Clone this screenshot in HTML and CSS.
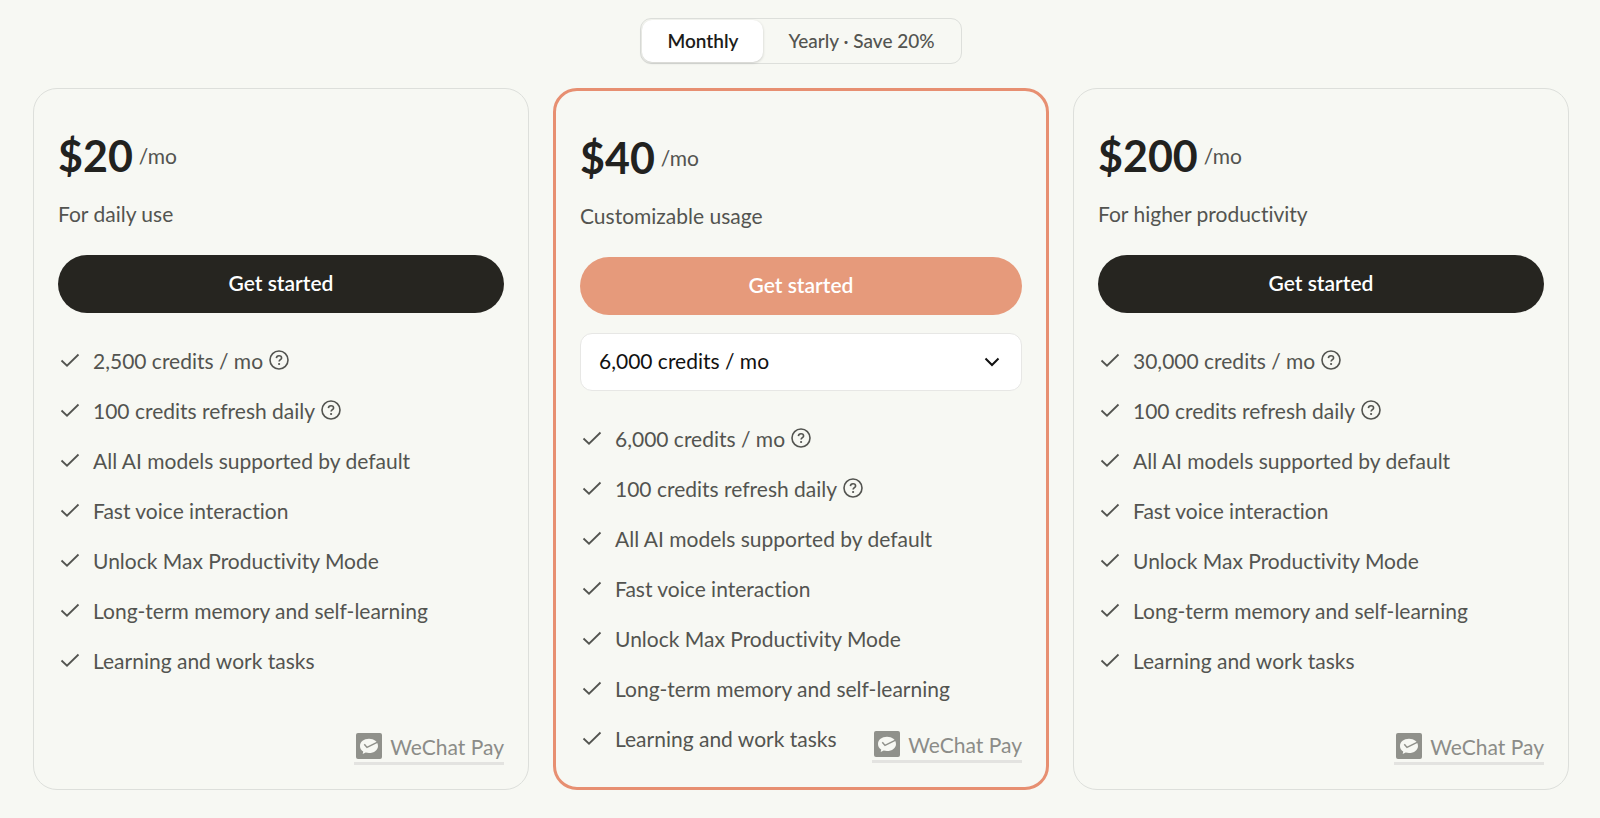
FILE: index.html
```
<!DOCTYPE html>
<html lang="en">
<head>
    <meta charset="UTF-8">
    <meta name="viewport" content="width=device-width, initial-scale=1">
    <title>Pricing</title>
    <link rel="stylesheet" href="styles.css">
</head>
<body>

<!-- shared icons -->
<svg class="icon-defs" width="0" height="0" aria-hidden="true">
    <symbol id="check" viewBox="0 0 24 24">
        <path d="M3.500 12.500l5.500 5.200L20.500 6.500" fill="none" stroke="currentColor" stroke-width="1.800"/>
    </symbol>
    <symbol id="help" viewBox="0 0 20 20">
        <circle cx="10" cy="10" r="9" fill="none" stroke="currentColor" stroke-width="1.600"/>
        <path d="M7.400 8.100c.1-1.500 1.200-2.400 2.600-2.400s2.600.9 2.600 2.200c0 1.800-2.500 1.800-2.500 3.700" fill="none" stroke="currentColor" stroke-width="1.600"/>
        <circle cx="10.100" cy="14" r="1.100" fill="currentColor"/>
    </symbol>
    <symbol id="wechat" viewBox="0 0 26 26">
        <rect width="26" height="26" rx="2" fill="#90918b"/>
        <path d="M13 5.800c-5.100 0-9 3.100-9 7.100 0 2.300 1.200 4.200 3.200 5.500l-.5 2.600 3-1.500c1 .3 2.100.5 3.300.5 5.100 0 9-3.100 9-7.100s-3.900-7.100-9-7.100z" fill="#f7f8f3"/>
        <path d="M8.300 11.200l2.700 3.200 10.600-5.300" fill="none" stroke="#90918b" stroke-width="1.500"/>
    </symbol>
</svg>

<div class="billing">
    <button class="billing-option active" type="button" aria-pressed="true">Monthly</button>
    <button class="billing-option" type="button" aria-pressed="false">Yearly · Save 20%</button>
</div>

<main class="plans">
    <section class="plan">
        <div class="price"><strong>$20</strong><span>/mo</span></div>
        <p class="tagline">For daily use</p>
        <button class="start" type="button">Get started</button>
        <ul class="features">
            <li><svg class="check"><use href="#check"/></svg>2,500 credits / mo<button class="help" type="button" aria-label="About credits"><svg><use href="#help"/></svg></button></li>
            <li><svg class="check"><use href="#check"/></svg>100 credits refresh daily<button class="help" type="button" aria-label="About daily refresh"><svg><use href="#help"/></svg></button></li>
            <li><svg class="check"><use href="#check"/></svg>All AI models supported by default</li>
            <li><svg class="check"><use href="#check"/></svg>Fast voice interaction</li>
            <li><svg class="check"><use href="#check"/></svg>Unlock Max Productivity Mode</li>
            <li><svg class="check"><use href="#check"/></svg>Long-term memory and self-learning</li>
            <li><svg class="check"><use href="#check"/></svg>Learning and work tasks</li>
        </ul>
        <a class="wechat" href="#"><svg><use href="#wechat"/></svg>WeChat Pay</a>
    </section>

    <section class="plan featured">
        <div class="price"><strong>$40</strong><span>/mo</span></div>
        <p class="tagline">Customizable usage</p>
        <button class="start" type="button">Get started</button>
        <div class="credits">
            <select aria-label="Credits per month">
                <option>6,000 credits / mo</option>
            </select>
            <svg class="chevron" viewBox="0 0 16 16"><path d="M1.500 4.500L8 11l6.500-6.500" fill="none" stroke="#111" stroke-width="2"/></svg>
        </div>
        <ul class="features">
            <li><svg class="check"><use href="#check"/></svg>6,000 credits / mo<button class="help" type="button" aria-label="About credits"><svg><use href="#help"/></svg></button></li>
            <li><svg class="check"><use href="#check"/></svg>100 credits refresh daily<button class="help" type="button" aria-label="About daily refresh"><svg><use href="#help"/></svg></button></li>
            <li><svg class="check"><use href="#check"/></svg>All AI models supported by default</li>
            <li><svg class="check"><use href="#check"/></svg>Fast voice interaction</li>
            <li><svg class="check"><use href="#check"/></svg>Unlock Max Productivity Mode</li>
            <li><svg class="check"><use href="#check"/></svg>Long-term memory and self-learning</li>
            <li><svg class="check"><use href="#check"/></svg>Learning and work tasks</li>
        </ul>
        <a class="wechat" href="#"><svg><use href="#wechat"/></svg>WeChat Pay</a>
    </section>

    <section class="plan">
        <div class="price"><strong>$200</strong><span>/mo</span></div>
        <p class="tagline">For higher productivity</p>
        <button class="start" type="button">Get started</button>
        <ul class="features">
            <li><svg class="check"><use href="#check"/></svg>30,000 credits / mo<button class="help" type="button" aria-label="About credits"><svg><use href="#help"/></svg></button></li>
            <li><svg class="check"><use href="#check"/></svg>100 credits refresh daily<button class="help" type="button" aria-label="About daily refresh"><svg><use href="#help"/></svg></button></li>
            <li><svg class="check"><use href="#check"/></svg>All AI models supported by default</li>
            <li><svg class="check"><use href="#check"/></svg>Fast voice interaction</li>
            <li><svg class="check"><use href="#check"/></svg>Unlock Max Productivity Mode</li>
            <li><svg class="check"><use href="#check"/></svg>Long-term memory and self-learning</li>
            <li><svg class="check"><use href="#check"/></svg>Learning and work tasks</li>
        </ul>
        <a class="wechat" href="#"><svg><use href="#wechat"/></svg>WeChat Pay</a>
    </section>
</main>

</body>
</html>
```

FILE: styles.css
```
* {
    box-sizing: border-box;
}
body {
    margin: 0;
    padding: 18px 31px 24px 33px;
    display: flex;
    flex-direction: column;
    align-items: center;
    gap: 24px;
    background: #f7f8f3;
    color: #535450;
    font-family: Lato, "Open Sans", sans-serif;
    font-size: 21px;
    font-variant-ligatures: none;
}
button, select {
    font-family: inherit;
    font-size: inherit;
}
button {
    border: 0;
    cursor: pointer;
}
.icon-defs {
    position: absolute;
}

/* monthly / yearly switch */
.billing {
    display: flex;
    padding: 1px;
    border: 1px solid #dddfdb;
    border-radius: 11px;
}
.billing-option {
    height: 42px;
    padding: 0 25px 2px;
    border-radius: 10px;
    background: none;
    color: #535450;
    font-size: 19px;
    font-weight: 500;
}
.billing-option.active {
    background: #fff;
    color: #1c1c1a;
    font-weight: 600;
    box-shadow: 0 1px 3px rgba(0, 0, 0, 0.18);
}

.plans {
    width: 100%;
    display: grid;
    grid-template-columns: repeat(3, 1fr);
    gap: 24px;
}
.plan {
    position: relative;
    padding: 38px 24px 24px;
    border: 1px solid #dddfdb;
    border-radius: 24px;
}
.plan.featured {
    border: 3px solid #e78f71;
}

.price {
    display: flex;
    align-items: center;
    gap: 6px;
    height: 56px;
}
.price strong {
    color: #22221f;
    font-size: 43px;
}
.tagline {
    margin: 17px 0 27px;
    line-height: 28px;
}

.start {
    display: block;
    width: 100%;
    height: 58px;
    padding: 0 0 3px;
    border-radius: 29px;
    background: #262520;
    color: #fff;
    font-weight: 600;
}
.featured .start {
    background: #e69a7b;
}

.credits {
    position: relative;
    margin-top: 18px;
}
.credits select {
    display: block;
    width: 100%;
    height: 58px;
    padding: 0 48px 3px 18px;
    border: 1px solid #e7e7e5;
    border-radius: 12px;
    background: #fff;
    color: #111;
    appearance: none;
}
.chevron {
    position: absolute;
    top: 21px;
    right: 22px;
    width: 16px;
    height: 16px;
    pointer-events: none;
}

.features {
    margin: 22px 0 0;
    padding: 0;
    list-style: none;
}
.features li {
    display: flex;
    align-items: center;
    height: 50px;
}
.check {
    width: 24px;
    height: 24px;
    margin-right: 11px;
}
.help {
    margin-left: 6px;
    padding: 0;
    background: none;
    color: inherit;
}
.help svg {
    display: block;
    width: 20px;
    height: 20px;
}

/* sits in the corner, beside the last feature */
.wechat {
    position: absolute;
    right: 24px;
    bottom: 24px;
    display: flex;
    align-items: center;
    gap: 8px;
    padding: 0 0 3px 2px;
    border-bottom: 3px solid #e3e3e0;
    color: #8b8c88;
    text-decoration: none;
}
.wechat svg {
    width: 26px;
    height: 26px;
}
```
